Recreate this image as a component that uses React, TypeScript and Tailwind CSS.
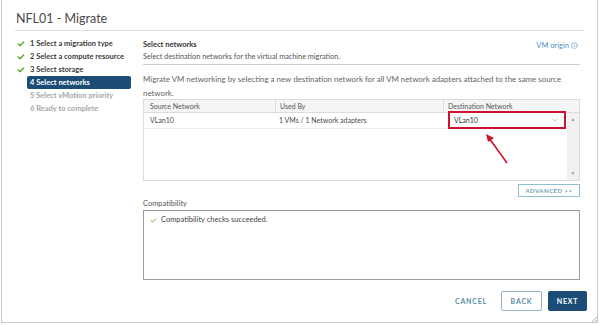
import { Check, ChevronDown, Info } from 'lucide-react';

const STEPS = [
  { n: 1, label: 'Select a migration type', state: 'done' },
  { n: 2, label: 'Select a compute resource', state: 'done' },
  { n: 3, label: 'Select storage', state: 'done' },
  { n: 4, label: 'Select networks', state: 'active' },
  { n: 5, label: 'Select vMotion priority', state: 'todo' },
  { n: 6, label: 'Ready to complete', state: 'todo' },
];

const FONT = { fontFamily: 'Lato, "Open Sans", sans-serif' };

function StepNav() {
  return (
    <div className="w-[141px] shrink-0 pt-[6px]">
      {STEPS.map((s) => (
        <div key={s.n} className="flex h-[13px] items-center pl-[15px]">
          <div className="flex w-[10px] items-center">
            {s.state === 'done' && <Check className="size-[8px] text-[#5aa220]" strokeWidth={4} />}
          </div>
          <div
            className={
              s.state === 'active'
                ? 'flex h-[13px] w-[104px] items-center whitespace-nowrap rounded-[2px] bg-[#1b4d76] px-[3px] text-[7.5px] font-bold text-white'
                : s.state === 'done'
                ? 'flex h-[13px] w-[104px] items-center whitespace-nowrap px-[3px] text-[7.5px] font-bold text-[#3a3a3a]'
                : 'flex h-[13px] w-[104px] items-center whitespace-nowrap px-[3px] text-[7.5px] font-bold text-[#a6a6a6]'
            }
          >
            {s.n} {s.label}
          </div>
        </div>
      ))}
    </div>
  );
}

function NetworkTable() {
  return (
    <div className="flex h-[82px] flex-col border border-[#dcdcdc] text-[7px] text-[#4a4a4a]">
      <div className="flex h-[13px] shrink-0 items-center border-b border-[#dcdcdc] bg-[#f5f5f5] text-[#555]">
        <div className="w-[131px] px-[6px]">Source Network</div>
        <div className="h-full w-[168px] border-l border-[#dcdcdc] px-[4px] leading-[12px]">Used By</div>
        <div className="h-full flex-1 border-l border-[#dcdcdc] px-[4px] leading-[12px]">Destination Network</div>
      </div>
      <div className="flex flex-1">
        <div className="flex-1">
          <div className="flex h-[16px] items-center border-b border-[#ececec]">
            <div className="w-[131px] px-[6px]">VLan10</div>
            <div className="w-[168px] px-[4px]">1 VMs / 1 Network adapters</div>
            <div className="relative h-full flex-1">
              <div className="absolute left-[5px] top-[-2px] flex h-[18px] w-[118px] items-center justify-between border-2 border-[#d0112b] bg-white pl-[4px] pr-[5px] text-[#333]">
                <span>VLan10</span>
                <ChevronDown className="size-[8px] text-[#999]" />
              </div>
            </div>
          </div>
        </div>
        <div className="flex w-[12px] flex-col items-center justify-between bg-[#f1f1f1] py-[4px] text-[5px] leading-none text-[#9a9a9a]">
          <span>▲</span>
          <span>▼</span>
        </div>
      </div>
    </div>
  );
}

export default function App() {
  return (
    <div className="relative h-[325px] w-[600px] overflow-hidden bg-white" style={FONT}>
      <div className="ml-[1px] flex h-[323px] w-[597px] flex-col border-x border-b border-[#c9c9c9] bg-white">
        <div className="mx-[13px] h-[31px] border-b border-[#dedede] pt-[9px] pl-[1px] text-[12.5px] leading-[20px] text-[#4a4a4a]">
          NFL01 - Migrate
        </div>

        <div className="flex">
          <StepNav />

          <div className="flex w-[437px] flex-col">
            <div className="border-b border-[#cfcfcf] pb-[2px] pt-[8px]">
              <div className="flex items-start justify-between">
                <div className="text-[7.5px] font-bold leading-[11px] text-[#333]">Select networks</div>
                <div className="mr-[2px] mt-[1px] flex items-center gap-[2px] text-[7.5px] leading-[11px] text-[#4a8fc0]">
                  VM origin
                  <Info className="size-[7px]" />
                </div>
              </div>
              <div className="text-[7.3px] leading-[11px] text-[#555]">
                Select destination networks for the virtual machine migration.
              </div>
            </div>

            <div className="mt-[7px] h-[27px] text-[7.9px] leading-[14px] text-[#666]">
              Migrate VM networking by selecting a new destination network for all VM network adapters attached to the same source network.
            </div>

            <NetworkTable />

            <button className="mt-[3px] h-[13px] w-[62px] self-end border border-[#8fc0d2] text-[6px] font-bold tracking-[0.5px] text-[#6f9fb5]">
              ADVANCED &gt;&gt;
            </button>

            <div className="text-[7.5px] leading-[13px] text-[#555]">Compatibility</div>
            <div className="h-[70px] border border-[#9d9d9d] pt-[3px]">
              <div className="flex items-center gap-[4px] pl-[6px] text-[7.5px] leading-[12px] text-[#444]">
                <Check className="size-[7px] text-[#5aa220]" strokeWidth={3} />
                Compatibility checks succeeded.
              </div>
            </div>
          </div>
        </div>

        <div className="mt-[11px] flex items-center justify-end pr-[10px] text-[7px] font-bold tracking-[0.8px]">
          <span className="mr-[14px] text-[#5a8fab]">CANCEL</span>
          <button className="mr-[6px] h-[20px] w-[41px] rounded-[2px] border border-[#9bb4c2] text-[#5a8fab]">BACK</button>
          <button className="h-[20px] w-[39px] rounded-[2px] bg-[#1b4d76] text-white">NEXT</button>
        </div>
      </div>

      <svg className="absolute left-[482px] top-[130px]" width="30" height="36" viewBox="0 0 30 36">
        <line x1="25" y1="33" x2="7" y2="8" stroke="#d0112b" strokeWidth="1.6" />
        <polygon points="4,4 12,8 6,12" fill="#d0112b" />
      </svg>

      <svg className="absolute left-[590px] top-[315px]" width="8" height="8" viewBox="0 0 8 8">
        <line x1="7" y1="2" x2="2" y2="7" stroke="#999" strokeWidth="0.8" />
        <line x1="7" y1="5" x2="5" y2="7" stroke="#999" strokeWidth="0.8" />
      </svg>
    </div>
  );
}
